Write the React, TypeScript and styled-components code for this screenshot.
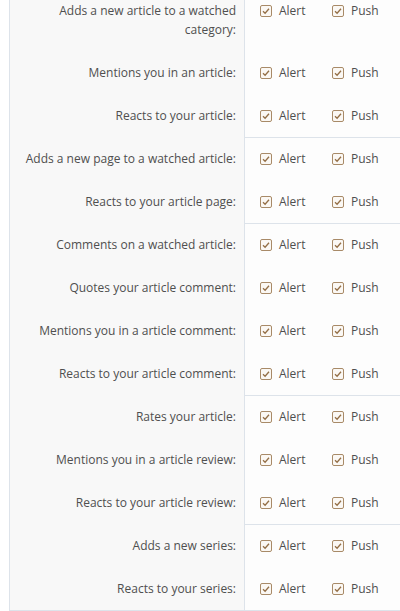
import React from "react";
import styled, { createGlobalStyle } from "styled-components";

interface IRow {
  label: string;
}

const groups: Array<Array<IRow>> = [
  [
    { label: "Adds a new article to a watched category:" },
    { label: "Mentions you in an article:" },
    { label: "Reacts to your article:" },
  ],
  [
    { label: "Adds a new page to a watched article:" },
    { label: "Reacts to your article page:" },
  ],
  [
    { label: "Comments on a watched article:" },
    { label: "Quotes your article comment:" },
    { label: "Mentions you in a article comment:" },
    { label: "Reacts to your article comment:" },
  ],
  [
    { label: "Rates your article:" },
    { label: "Mentions you in a article review:" },
    { label: "Reacts to your article review:" },
  ],
  [{ label: "Adds a new series:" }, { label: "Reacts to your series:" }],
];

const GlobalStyle = createGlobalStyle`
  html, body {
    margin: 0;
    padding: 0;
    background: #ffffff;
    overflow: hidden;
  }
  body {
    font-family: "Open Sans", "Noto Sans", sans-serif;
  }
`;

const Page = styled.div`
  height: 611px;
  overflow: hidden;
  padding-left: 9px;
`;

const Form = styled.div`
  margin-top: -11px;
  border-left: 1px solid #dde3ea;
  border-bottom: 1px solid #dde3ea;
  background: #fdfdfd;
`;

const Row = styled.div`
  display: grid;
  grid-template-columns: 235px 1fr;
`;

const Label = styled.div`
  background: #f8f8f8;
  border-right: 1px solid #dde3ea;
  padding: 12px 8px 12px 2px;
  text-align: right;
  font-size: 12px;
  line-height: 19px;
  color: #4f4f4f;
`;

const Options = styled.div<{ $separated: boolean }>`
  display: flex;
  align-items: flex-start;
  padding: ${(p) => (p.$separated ? "11px" : "12px")} 0 12px 15px;
  border-top: ${(p) => (p.$separated ? "1px solid #dde3ea" : "none")};
`;

const Choice = styled.label`
  display: flex;
  align-items: center;
  gap: 7px;
  width: 72px;
  font-size: 12px;
  line-height: 19px;
  color: #4f4f4f;
`;

function CheckIcon() {
  return (
    <svg width="12" height="12" viewBox="0 0 12 12">
      <rect
        x="0.5"
        y="0.5"
        width="11"
        height="11"
        rx="1.5"
        fill="#fbf8f4"
        stroke="#a88a68"
      />
      <path
        d="M3 6.2 L5.1 8.2 L9 3.8"
        fill="none"
        stroke="#946f47"
        strokeWidth="1.3"
      />
    </svg>
  );
}

function App() {
  return (
    <>
      <GlobalStyle />
      <Page>
        <Form>
          {groups.map((group, gi) =>
            group.map((row, ri) => (
              <Row key={row.label}>
                <Label>{row.label}</Label>
                <Options $separated={gi > 0 && ri === 0}>
                  <Choice>
                    <CheckIcon />
                    Alert
                  </Choice>
                  <Choice>
                    <CheckIcon />
                    Push
                  </Choice>
                </Options>
              </Row>
            ))
          )}
        </Form>
      </Page>
    </>
  );
}

export default App;
